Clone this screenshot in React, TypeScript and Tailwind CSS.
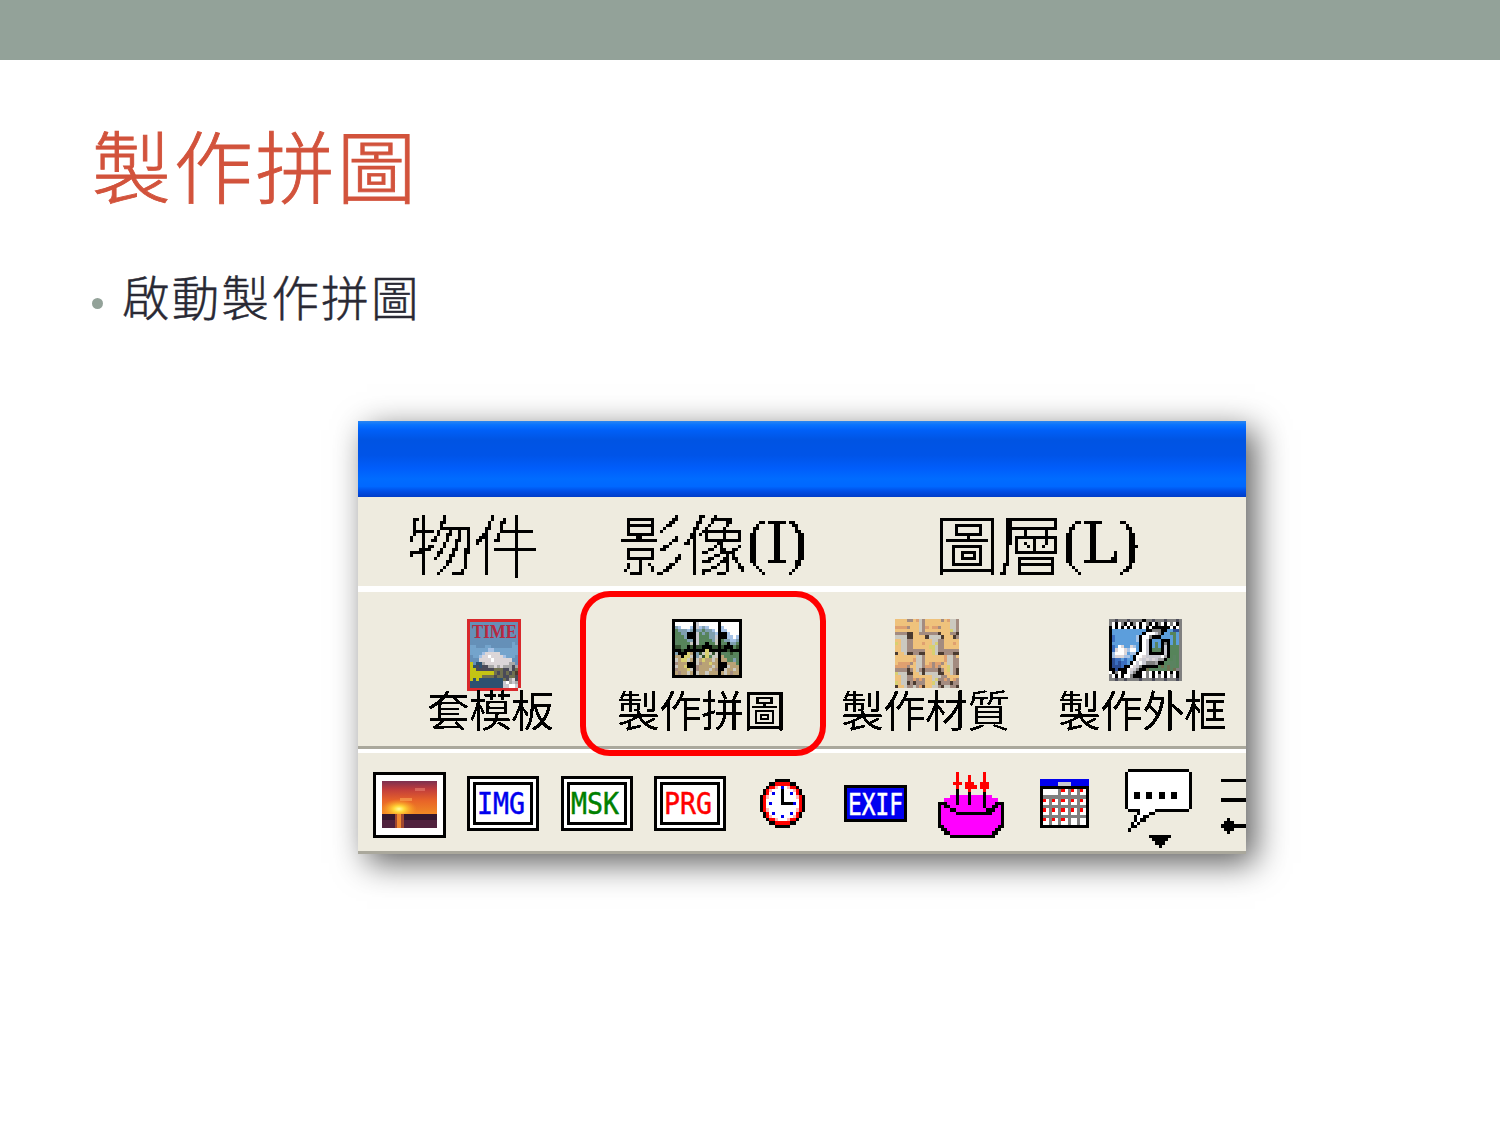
import React from "react";

const palette: Record<string, string> = {
  K: "#000000", W: "#ffffff", R: "#ff0000", B: "#0000ee", M: "#ff00ff", P: "#ffb8b8",
  G: "#808080", S: "#c8c8d0", g: "#5a8360", d: "#34502f", b: "#a5c2e6", s: "#5c9edc",
  c: "#3b6fc0", n: "#2c4e94", l: "#7f9fb0", o: "#efc27c", p: "#dfa070", t: "#b9a276",
  y: "#d8d070", v: "#cbc9c0", u: "#a38b80", k: "#4a3a30", e: "#56845a", a: "#a0a0a0",
  r: "#d8282c", x: "#6590b8", m: "#dcd6d8", z: "#4a4a58", j: "#c4c414", h: "#2c5070", q: "#707050",
  i: "#74a4cc", w: "#a8a8a8",
};

function Pixels({ rows, w, h, className = "" }: { rows: string[]; w: number; h: number; className?: string }) {
  const cols = Math.max(...rows.map((r) => r.length));
  return (
    <svg width={w} height={h} viewBox={`0 0 ${cols} ${rows.length}`} preserveAspectRatio="none" shapeRendering="crispEdges" className={"block shrink-0 " + className}>
      {rows.flatMap((row, y) =>
        row.split("").map((c, x) => (c === "." ? null : <rect key={`${x}-${y}`} x={x} y={y} width={1} height={1} fill={palette[c]} />))
      )}
    </svg>
  );
}

const clock = [
  ".....KKKKK.....", "...KKRRRRRKK...", "..KRRPWBWPRRK..", ".KRPWWWKWWWPRK.", ".KRWBWWKWWBWRK.",
  "KRPWWWWKWWWWPRK", "KRWWWWWKWWWWWRK", "KRWBWWWKKKKBWRK", "KRWWWWWWWWWWWRK", "KRPWWWWWWWWWPRK",
  ".KRWBWWWWWBWRK.", ".KRPWWWBWWWPRK.", "..KRRPWWWPRRK..", "...KKRRRRRKK...", ".....KKKKK.....",
];

const cake = [
  "......R........R......", "......R...R....R......", "......R...R....R......", ".....RRR.RRR..RRR.....",
  "......R..RRRR.RRR.....", "......K...R....R......", "......K...K....K......", "....MMKMMMKMMMMKMM....",
  "..MMMMKMMMKMMMMKMMMM..", "KKKMMMKMMMKMMMMKMMMKKK", "KMKKMMMMMMMMMMMKMMKKMK", "KMMMKKMMMMMMMMMMKKKMMK",
  "KMMMMMKKKKKKKKKKKKMMMK", "KMMMMMMMMMMMMMMMMMMMMK", "KMMMMMMMMMMMMMMMMMMMMK", "KMMMMMMMMMMMMMMMMMMMMK",
  "KKMMMMMMMMMMMMMMMMMMKK", ".KKMMMMMMMMMMMMMMMMKK.", "..KKMMMMMMMMMMMMMMKK..", "....KKKKKKKKKKKKKKK...",
];

const calendar = [
  "BBBBBBBBBBBBBBBB", "BBBBBBSSSSBBBBBB", "KKKKKKKKKKKKKKKK", "KWWWWWGRWGRWGRWK", "KWWWWWGWWGWWGWWK",
  "KGGGGGGGGGGGGGGK", "KRWGRWGRWGRWGRWK", "KWWGWWGWWGWWGWWK", "KGGGGGGGGGGGGGGK", "KRWGRWGRWGRWGRWK",
  "KWWGWWGWWGWWGWWK", "KGGGGGGGGGGGGGGK", "KRWGRWGRWGWWGWWK", "KWWGWWGWWGWWGWWK", "KKKKKKKKKKKKKKKK",
];

const bubble = [
  ".KKKKKKKKKKKKKKKKKKKK.", "KWWWWWWWWWWWWWWWWWWWWK", "KWWWWWWWWWWWWWWWWWWWWK", "KWWWWWWWWWWWWWWWWWWWWK",
  "KWWWWWWWWWWWWWWWWWWWWK", "KWWWWWWWWWWWWWWWWWWWWK", "KWWWWWWWWWWWWWWWWWWWWK", "KWWKKWWKKWWKKWWKKWWWWK",
  "KWWKKWWKKWWKKWWKKWWWWK", "KWWWWWWWWWWWWWWWWWWWWK", "KWWWWWWWWWWWWWWWWWWWWK", "KWWWWWWWWWWWWWWWWWWWWK",
  ".KKKKWWWWWKKKKKKKKKKK.", "....KWWWKK............", "...KWWKK..............", "...KWKK...............",
  "..KWK.................", "..KK..................", ".K....................", "......................",
  "........KKKKKKK.......", ".........KKKKK........", "..........KKK.........", "...........K..........",
];

const lines = [
  "KKKKKKKK", "........", "........", "........", "........", "........", "KKKKKKKK", "........",
  "........", "........", "........", "........", "..K.....", ".KKK....", "KKKKKKKK", ".KKK....", "..K.....",
];

const puzzle = [
  "KKKKKKKKKKKKKKKKKKKKKKK", "KWWWWWWKSWWWWWWKWWWWWWK", "KlbWWWbKSblbWWWKbWWWWWK", "KelllblKllgllbWKbbWWWWK",
  "KeellKKKSelgllbKKKbWWWK", "KegelKKKSeeellSKKKbbWbK", "KgeeellKSegeelvKellbblK", "KgeeeevKSeeKeevKgeKllgK",
  "KddeeKdKddKKKddKdKKKedK", "KKKdKKKKKKKyKKKKKKdKKKK", "KlKKKytKldvyvdvKggedeeK", "KttKyyvKlvdyevvKteegegK",
  "KvtyyvtKvtyttvtKtteelgK", "KutttKKKvuttyttKKKttteK", "KvttyKKKuttttvtKKKvtttK", "KutttyvKutttvtuKKvttvtK",
  "KtuttvtKvttvtttKtvtuttK", "KKKKKKKKKKKKKKKKKKKKKKK",
];

const weave = [
  "oooouuopvuooooouopvvu", "oooooooovuoooooooovvu", "ppppuooovupoppuooovvu", "oooooooovuooooooooyvu",
  "uuuukkoouuuuuukooouuk", "vvvvkkooookvvvvkoooku", "oovvuuoooooovvuuooooo", "yovvuuooopoovyuuooopo",
  "oovvuuoooooyyvuuooooo", "oovvuuuuuuooyvuuuuuuu", "koovkkuukkooyvkkuuukk", "ooooooovvuoooooopvvuo",
  "oooooopvvuoooooopvvuu", "oppppuovvuopuppuovvuu", "ppppuoovvuppupuooyvuu", "uuuukuovukuuuukuoyvuk",
  "yvvvkkoovkvvvvkkoovuk", "oovvuuoooooovvvuuoooo", "oovvuupupuoovyuupuopu", "yovvkukuuuooyvkuuukuu",
  "koovuuvupkoovvukvvuuk",
];

const magazine = [
  "rrrrrrrrrrrrrrrrrr", "rxxxxxxxxxxxxxxxxr", "rxxxxxxxxxxxxxxxxr", "rxxxxxxxxxxxxxxxxr",
  "rxxxxxxxxxxxxxxxxr", "rxxxxxxxxxxxxxxxxr", "rxxxxxxxxxxxxxxxxr", "rxxxxxxxxxxxxxxixr",
  "riixxxiixxxxxxxiir", "riiiiiibbiiiiiiiir", "riiiibmmmmmiiiiiir", "rxiibmmWmmmmbiiixr",
  "rxxxmmmmWmmmmmmxxr", "rjxhhwmmmmmmmmwwxr", "rjhzhzzwwmwmwwwzwr", "rjjzzzzzzqqqzzwzqr",
  "rjjjjjjjjqzqzqzqkr", "rjjjjqqqqzqqzzqqzr", "rjhjhhhhhhhhqzwmzr", "rhhhhhhhhhhhSWwSwr",
  "rhhhhhhhhhhhSSWWSr", "rrrrrrrrrrrrrrrrr.",
];

const wrench = [
  "GGzGGGzGGGGKGGzGGGzGGGzG", "GWKWGKWKGWKWGKWKGWKWGWKG", "KWKWKWKWKWKWKWKKKKKKWKWG", "KsssssssssssKKGGGKKssnnG",
  "KssssssssssKWWWSGKsseesG", "KcsssssssbKWWGKKKssssesG", "KcsssssssbKWSKsssKKKsesG", "KsssssssssKWSKsgsKGKsesG",
  "KcsWmssmbsKWSKsgsKSKeeeG", "KcmWWmbWWsKWSKeggKSKeeeG", "KbWWWmsbbKWWSKKKKKSKeeeG", "KbmmmbbsKWWmSSSSSWaKegeG",
  "KnccscssKWmSmSmSaaKeegeG", "KncnccsKWSWSGGGaKKegggeG", "KnnncKKWmSGKKKKKeqgqggeG", "KKnKKKWmSGKKqggeggeqgqGG",
  "WKGWKKWSGKKWGWKWKWKWKWKG", "GWKWKWWGKKKWGWKWGWKWGWKG", "GGzGGzGGGGzGGGzGGGzGGGzG",
];

function Caption({ text, w, h, size, fill }: { text: string; w: number; h: number; size: number; fill: string }) {
  return (
    <svg width={w + 8} height={h + 20} className="-mx-1 -my-2.5 block shrink-0">
      <text x={4} y={h + 10} fontSize={size} fill={fill} stroke={fill} strokeWidth={0.5} textLength={w} lengthAdjust="spacingAndGlyphs" fontFamily="DejaVu Sans Mono, monospace">
        {text}
      </text>
    </svg>
  );
}

function Framed({ text, fill }: { text: string; fill: string }) {
  return (
    <div className="h-[55px] w-[72px] border-3 border-black bg-white p-[3px]">
      <div className="flex h-full items-center justify-center border-3 border-black pr-[4px] pb-[2px]">
        <Caption text={text} w={48} h={22} size={31} fill={fill} />
      </div>
    </div>
  );
}

function Sunset() {
  return (
    <svg width="55" height="47" viewBox="0 0 55 47" className="block">
      <defs>
        <linearGradient id="sky" x1="0" y1="0" x2="0" y2="1">
          <stop offset="0" stopColor="#7c3050" />
          <stop offset="0.25" stopColor="#c03c3c" />
          <stop offset="0.6" stopColor="#e86428" />
          <stop offset="1" stopColor="#f08a24" />
        </linearGradient>
        <radialGradient id="glow">
          <stop offset="0" stopColor="#ffffa0" />
          <stop offset="0.3" stopColor="#ffd838" />
          <stop offset="1" stopColor="#ffa020" stopOpacity="0" />
        </radialGradient>
      </defs>
      <rect width="55" height="33" fill="url(#sky)" />
      <rect x="33" y="7" width="10" height="3" fill="#e88070" opacity="0.6" />
      <rect x="18" y="17" width="12" height="3" fill="#f8a050" opacity="0.7" />
      <ellipse cx="17" cy="28" rx="18" ry="10" fill="url(#glow)" />
      <rect y="33" width="55" height="14" fill="#34182e" />
      <rect y="39" width="55" height="8" fill="#50223e" />
      <rect x="13" y="33" width="9" height="14" fill="#a04830" />
      <rect x="15" y="33" width="4" height="14" fill="#f08830" />
    </svg>
  );
}

function Tool({ label, className, children }: { label: string; className: string; children: React.ReactNode }) {
  return (
    <div className={"flex shrink-0 flex-col " + className}>
      <div className="h-[69px]">{children}</div>
      <div className="-ml-[2px] h-[56px] text-[43px] leading-[41px] font-normal tracking-[-1px] whitespace-nowrap text-black [filter:url(#crisp)]">{label}</div>
    </div>
  );
}

export default function App() {
  return (
    <div className="h-[1125px] w-[1500px] overflow-hidden bg-white font-['Noto_Sans_CJK_TC',sans-serif]">
      <svg width="0" height="0" className="absolute">
        <filter id="crisp" x="0" y="0" width="100%" height="100%" colorInterpolationFilters="sRGB">
          <feComponentTransfer>
            <feFuncA type="discrete" tableValues="0 1" />
          </feComponentTransfer>
        </filter>
        <filter id="mosaic" x="0" y="0" width="100%" height="100%" colorInterpolationFilters="sRGB">
          <feFlood x="1" y="1" width="1" height="1" floodColor="#000" />
          <feComposite x="0" y="0" width="3" height="3" />
          <feTile result="grid" />
          <feComposite in="SourceGraphic" in2="grid" operator="in" />
          <feComponentTransfer>
            <feFuncA type="discrete" tableValues="0 0 1 1 1 1" />
          </feComponentTransfer>
          <feMorphology operator="dilate" radius="1" />
        </filter>
      </svg>
      <header className="h-[60px] bg-[#93a299]" />
      <h1 className="mt-[44px] ml-[92px] h-[120px] text-[79px] leading-[120px] font-light tracking-[2.7px] text-[#d2533c] [-webkit-text-stroke:0.9px_#d2533c]">製作拼圖</h1>
      <div className="mt-[39px] ml-[92px] flex h-[74px] items-center">
        <span className="mt-1.5 size-[11px] rounded-full bg-[#93a299]" />
        <span className="ml-[19px] h-[82px] text-[47.5px] leading-[74px] font-light tracking-[2.3px] text-[#292934] [-webkit-text-stroke:0.5px_#292934]">啟動製作拼圖</span>
      </div>

      <main className="mt-[84px] ml-[358px] flex h-[433px] w-[888px] flex-col bg-[#eeebdf] shadow-[9px_9px_31px_rgba(0,0,0,0.64)]">
        <div className="h-[76px] shrink-0 bg-[linear-gradient(180deg,#2b86f0_0%,#0873ff_5%,#0060f8_12%,#0054e3_25%,#0054e8_45%,#005dfb_62%,#006cff_76%,#0068ff_86%,#0050e8_92%,#003cc8_100%)]" />
        <nav className="flex h-[89px] shrink-0 text-[67px] leading-[89px] font-light tracking-[-3px] whitespace-nowrap text-black">
          <div className="ml-[49px] w-[211px] tracking-[-1px] [filter:url(#mosaic)]">物件</div>
          <div className="flex w-[316px] [filter:url(#mosaic)]">
            影像<span className="inline-block h-[89px] font-['Liberation_Serif',serif] text-[62px] font-normal tracking-[-0.5px]">(I)</span>
          </div>
          <div className="flex w-[220px] [filter:url(#mosaic)]">
            圖層<span className="inline-block h-[89px] font-['Liberation_Serif',serif] text-[62px] font-normal tracking-[-1px]">(L)</span>
          </div>
        </nav>
        <div className="h-[6px] shrink-0 bg-white" />
        <section className="relative flex h-[154px] shrink-0 pt-[27px]">
          <Tool label="套模板" className="ml-[71px] w-[126px]">
            <div className="relative ml-[38px] w-[54px]">
              <Pixels rows={magazine} w={54} h={72} />
              <svg width="54" height="36" className="absolute top-0 left-0">
                <text x="5" y="19" fontSize="19" fontWeight="700" fill="#b82840" textLength="45" lengthAdjust="spacingAndGlyphs" fontFamily="Liberation Serif, serif">TIME</text>
              </svg>
            </div>
          </Tool>
          <Tool label="製作拼圖" className="ml-[64px] w-[168px]">
            <Pixels rows={puzzle} w={70} h={59} className="ml-[53px]" />
          </Tool>
          <Tool label="製作材質" className="ml-[56px] w-[168px]">
            <Pixels rows={weave} w={64} h={69} className="ml-[52px]" />
          </Tool>
          <Tool label="製作外框" className="ml-[49px] w-[168px]">
            <Pixels rows={wrench} w={73} h={62} className="ml-[49px]" />
          </Tool>
          <div className="absolute -top-[1px] left-[222px] h-[165px] w-[246px] rounded-[30px] border-6 border-[#ff0000]" />
        </section>
        <div className="h-[3px] shrink-0 bg-[#aaa89c]" />
        <div className="h-[4px] shrink-0 bg-white" />
        <section className="flex h-[98px] shrink-0 items-start overflow-hidden pl-[15px]">
          <div className="mt-[19px] h-[66px] w-[73px] border-3 border-black bg-white p-[6px] pb-[7px]">
            <Sunset />
          </div>
          <div className="mt-[23px] ml-[21px] flex gap-[21.5px]">
            <Framed text="IMG" fill="#0000ee" />
            <Framed text="MSK" fill="#008000" />
            <Framed text="PRG" fill="#ff0000" />
          </div>
          <Pixels rows={clock} w={45} h={49} className="mt-[26px] ml-[34px]" />
          <div className="mt-[32px] ml-[39px] flex h-[37px] w-[64px] items-center justify-center border-3 border-black bg-[#0000f0] pb-px">
            <Caption text="EXIF" w={55} h={23} size={31} fill="#ffffff" />
          </div>
          <Pixels rows={cake} w={66} h={66} className="mt-[19px] ml-[31px]" />
          <Pixels rows={calendar} w={49} h={49} className="mt-[26px] ml-[36px]" />
          <Pixels rows={bubble} w={67} h={79} className="mt-[16px] ml-[36px]" />
          <Pixels rows={lines} w={25} h={55} className="mt-[26px] ml-[29px]" />
        </section>
        <div className="h-[3px] shrink-0 bg-[#aaa89c]" />
      </main>
    </div>
  );
}
